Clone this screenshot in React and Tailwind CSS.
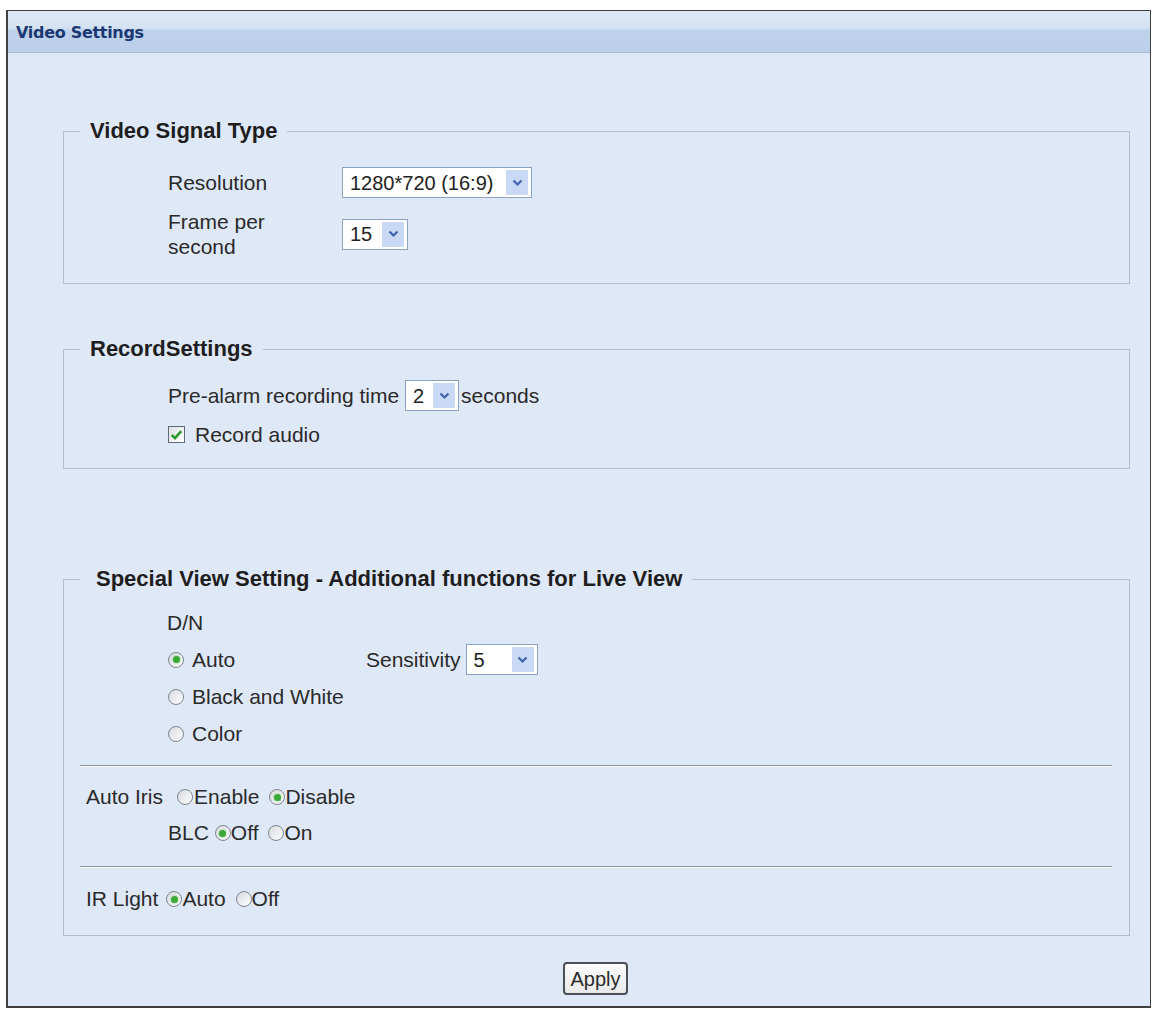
import React from "react";

function Chevron() {
  return (
    <svg width="11" height="8" viewBox="0 0 11 8">
      <polyline points="1.5,1.5 5.5,5.5 9.5,1.5" fill="none" stroke="#3f63ad" strokeWidth="2.2" />
    </svg>
  );
}

function Select({ value, w }) {
  return (
    <div className={`flex h-[31px] shrink-0 items-center border border-[#8ba2c6] bg-white pl-[7px] pr-[3px] ${w}`}>
      <span className="flex-1 text-[20px] leading-none text-[#222]">{value}</span>
      <span className="flex h-[25px] w-[22px] items-center justify-center bg-[#c8d8f5]">
        <Chevron />
      </span>
    </div>
  );
}

function Radio({ checked }) {
  return (
    <span className="flex h-[16px] w-[16px] shrink-0 items-center justify-center rounded-full border border-[#7c8692] bg-[linear-gradient(135deg,#d6d9dd,#ffffff)]">
      {checked && <span className="h-[7px] w-[7px] rounded-full bg-[#3daa38] shadow-[0_0_2px_#6fd06a]" />}
    </span>
  );
}

function Checkbox() {
  return (
    <span className="flex h-[17px] w-[17px] shrink-0 items-center justify-center border border-[#5f6b78] bg-[linear-gradient(135deg,#dde0e3,#ffffff)]">
      <svg width="13" height="12" viewBox="0 0 13 12">
        <polyline points="1.8,6 5,9.2 11.2,2.2" fill="none" stroke="#2c9b2c" strokeWidth="2.6" />
      </svg>
    </span>
  );
}

function Fieldset({ legend, legendPad, children, className }) {
  return (
    <fieldset className={`ml-[55px] w-[1067px] border border-[#b3becb] pl-[16px] pr-[17px] ${className}`}>
      <legend className={`pr-[10px] text-[22px] font-bold leading-[24px] text-[#1e1e1e] ${legendPad}`}>
        {legend}
      </legend>
      {children}
    </fieldset>
  );
}

function Rule() {
  return <div className="h-0 border-t border-b border-t-[#8e959d] border-b-[#f6f8fc]" />;
}

export default function App() {
  return (
    <div className="min-h-[1012px] bg-white pl-[6px] pt-[10px] font-['Liberation_Sans',Arial,sans-serif] text-[21px] text-[#2a2a2a]">
      <div className="h-[998px] w-[1145px] border border-b-2 border-l-2 border-[#404040] bg-[#dfe8f7]">
        {/* header bar */}
        <div className="flex h-[42px] items-center border-b border-[#a6b9d3] bg-[linear-gradient(to_bottom,#dde9f5_0%,#d3e2f2_42%,#bfd2ec_48%,#bbcfea_100%)] pl-[8px] pt-[3px]">
          <span className="font-['DejaVu_Sans',Verdana,sans-serif] text-[16px] font-bold tracking-[-0.3px] text-[#1b3872]">
            Video Settings
          </span>
        </div>

        {/* Video Signal Type */}
        <Fieldset legend="Video Signal Type" legendPad="pl-[10px]" className="mt-[66px] pt-[24px] pb-[24px]">
          <div className="flex h-[31px] items-center">
            <span className="ml-[88px] w-[174px] leading-[25px]">Resolution</span>
            <Select value="1280*720 (16:9)" w="w-[190px]" />
          </div>
          <div className="mt-[11px] flex h-[50px] items-center">
            <span className="ml-[88px] w-[174px] leading-[25px]">
              Frame per
              <br />
              second
            </span>
            <Select value="15" w="w-[66px]" />
          </div>
        </Fieldset>

        {/* RecordSettings */}
        <Fieldset legend="RecordSettings" legendPad="pl-[10px]" className="mt-[53px] pt-[19px] pb-[21px]">
          <div className="flex h-[31px] items-center">
            <span className="ml-[88px] leading-[25px]">Pre-alarm recording time</span>
            <div className="ml-[6px] flex">
              <Select value="2" w="w-[54px]" />
            </div>
            <span className="ml-[2px] leading-[25px]">seconds</span>
          </div>
          <div className="mt-[11px] flex h-[25px] items-center">
            <div className="ml-[88px] flex">
              <Checkbox />
            </div>
            <span className="ml-[10px] leading-[25px]">Record audio</span>
          </div>
        </Fieldset>

        {/* Special View Setting */}
        <Fieldset
          legend="Special View Setting - Additional functions for Live View"
          legendPad="pl-[16px]"
          className="mt-[98px] pt-[13px] pb-[21px]"
        >
          <div className="flex h-[37px] items-center">
            <span className="ml-[87px]">D/N</span>
          </div>
          <div className="flex h-[37px] items-center">
            <div className="ml-[88px] flex">
              <Radio checked />
            </div>
            <span className="ml-[8px] w-[174px]">Auto</span>
            <span>Sensitivity</span>
            <div className="ml-[5px] flex">
              <Select value="5" w="w-[72px]" />
            </div>
          </div>
          <div className="flex h-[37px] items-center">
            <div className="ml-[88px] flex">
              <Radio />
            </div>
            <span className="ml-[8px]">Black and White</span>
          </div>
          <div className="flex h-[37px] items-center">
            <div className="ml-[88px] flex">
              <Radio />
            </div>
            <span className="ml-[8px]">Color</span>
          </div>

          <div className="mt-[13px]">
            <Rule />
          </div>

          <div className="mt-[15px] flex h-[30px] items-center">
            <span className="ml-[6px]">Auto Iris</span>
            <div className="ml-[14px] flex">
              <Radio />
            </div>
            <span className="ml-[1px]">Enable</span>
            <div className="ml-[10px] flex">
              <Radio checked />
            </div>
            <span>Disable</span>
          </div>
          <div className="mt-[6px] flex h-[30px] items-center">
            <span className="ml-[88px]">BLC</span>
            <div className="ml-[6px] flex">
              <Radio checked />
            </div>
            <span>Off</span>
            <div className="ml-[10px] flex">
              <Radio />
            </div>
            <span>On</span>
          </div>

          <div className="mt-[18px]">
            <Rule />
          </div>

          <div className="mt-[16px] flex h-[30px] items-center">
            <span className="ml-[6px]">IR Light</span>
            <div className="ml-[8px] flex">
              <Radio checked />
            </div>
            <span>Auto</span>
            <div className="ml-[10px] flex">
              <Radio />
            </div>
            <span>Off</span>
          </div>
        </Fieldset>

        <div className="mt-[26px] flex">
          <button className="ml-[555px] flex h-[33px] w-[65px] items-center justify-center rounded-[4px] border-2 border-[#4b5058] bg-[linear-gradient(to_bottom,#fbfbfb,#e9e9e9)] text-[20px] text-[#2a2a2a]">
            Apply
          </button>
        </div>
      </div>
    </div>
  );
}
